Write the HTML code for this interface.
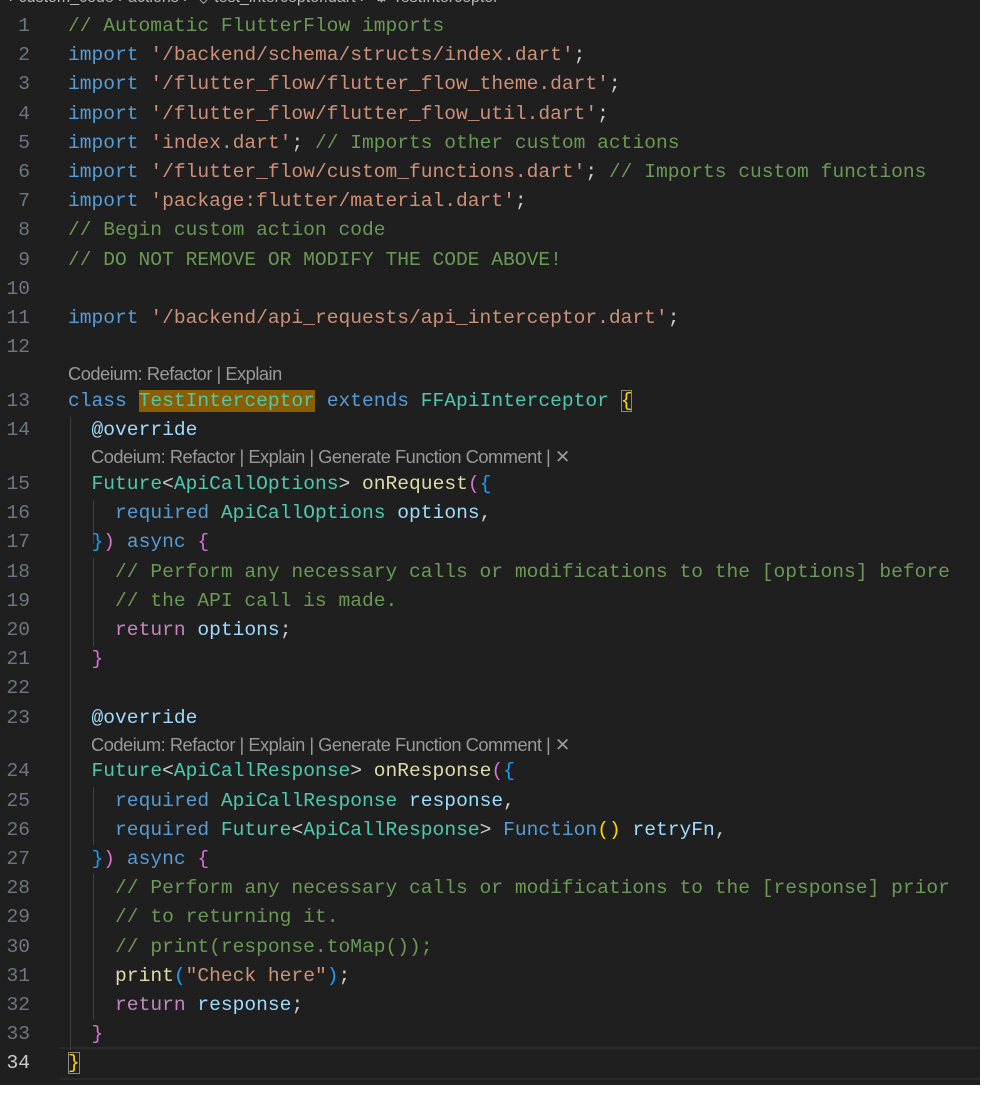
<!DOCTYPE html>
<html><head><meta charset="utf-8"><style>
html,body{margin:0;padding:0;background:#fff;width:1000px;height:1109px;overflow:hidden}
#ed{position:absolute;left:0;top:0;width:980px;height:1085px;background:#1f1f1f;overflow:hidden}
.bc{position:absolute;top:-13px;left:0;font:16px "Liberation Sans",sans-serif;color:#bbb;white-space:pre}
.ln{position:absolute;left:0;width:30px;text-align:right;font:19.6px "Liberation Mono",monospace;color:#6e7681;height:29.2px;line-height:29.2px}
.cd{position:absolute;left:68px;font:19.6px "Liberation Mono",monospace;color:#cccccc;white-space:pre;height:29.2px;line-height:29.2px}
.lens{position:absolute;font:18.3px "Liberation Sans",sans-serif;color:#999;white-space:pre;letter-spacing:-0.5px;line-height:24.6px}
.g{position:absolute;width:1px;background:#404040}
.c{color:#6a9955}.k{color:#569cd6}.s{color:#ce9178}.t{color:#4ec9b0}.f{color:#dcdcaa}.v{color:#9cdcfe}.p{color:#c586c0}
.b1{color:#ffd700}.b2{color:#da70d6}.b3{color:#179fff}
.hl{background:#8a5d00}.box{outline:1px solid #888;outline-offset:-1px}
</style></head><body><div id="ed">
<div class="bc">  › custom_code › actions ›  ◇ test_interceptor.dart ›  ⚙ TestInterceptor</div>
<div class="cur" style="position:absolute;left:60px;top:1047px;width:920px;height:29px;border-top:2px solid #2a2a2a;border-bottom:2px solid #2a2a2a"></div>
<div class="g" style="left:70px;top:417px;height:633px"></div>
<div class="g" style="left:93px;top:500px;height:44px"></div>
<div class="g" style="left:93px;top:558px;height:88px"></div>
<div class="g" style="left:93px;top:787px;height:58px"></div>
<div class="g" style="left:93px;top:874px;height:146px"></div>
<div id="code"></div>
</div>
<script>
const L=[
[1,'<span class="c">// Automatic FlutterFlow imports</span>'],
[2,'<span class="k">import</span> <span class="s">\'/backend/schema/structs/index.dart\'</span>;'],
[3,'<span class="k">import</span> <span class="s">\'/flutter_flow/flutter_flow_theme.dart\'</span>;'],
[4,'<span class="k">import</span> <span class="s">\'/flutter_flow/flutter_flow_util.dart\'</span>;'],
[5,'<span class="k">import</span> <span class="s">\'index.dart\'</span>; <span class="c">// Imports other custom actions</span>'],
[6,'<span class="k">import</span> <span class="s">\'/flutter_flow/custom_functions.dart\'</span>; <span class="c">// Imports custom functions</span>'],
[7,'<span class="k">import</span> <span class="s">\'package:flutter/material.dart\'</span>;'],
[8,'<span class="c">// Begin custom action code</span>'],
[9,'<span class="c">// DO NOT REMOVE OR MODIFY THE CODE ABOVE!</span>'],
[10,''],
[11,'<span class="k">import</span> <span class="s">\'/backend/api_requests/api_interceptor.dart\'</span>;'],
[12,''],
['L','Codeium: Refactor | Explain',68],
[13,'<span class="k">class</span> <span class="t hl">TestInterceptor</span> <span class="k">extends</span> <span class="t">FFApiInterceptor</span> <span class="b1 box">{</span>'],
[14,'  <span class="v">@override</span>'],
['L','Codeium: Refactor | Explain | Generate Function Comment | ✕',91],
[15,'  <span class="t">Future</span>&lt;<span class="t">ApiCallOptions</span>&gt; <span class="f">onRequest</span><span class="b2">(</span><span class="b3">{</span>'],
[16,'    <span class="k">required</span> <span class="t">ApiCallOptions</span> <span class="v">options</span>,'],
[17,'  <span class="b3">}</span><span class="b2">)</span> <span class="k">async</span> <span class="b2">{</span>'],
[18,'    <span class="c">// Perform any necessary calls or modifications to the [options] before</span>'],
[19,'    <span class="c">// the API call is made.</span>'],
[20,'    <span class="p">return</span> <span class="v">options</span>;'],
[21,'  <span class="b2">}</span>'],
[22,''],
[23,'  <span class="v">@override</span>'],
['L','Codeium: Refactor | Explain | Generate Function Comment | ✕',91],
[24,'  <span class="t">Future</span>&lt;<span class="t">ApiCallResponse</span>&gt; <span class="f">onResponse</span><span class="b2">(</span><span class="b3">{</span>'],
[25,'    <span class="k">required</span> <span class="t">ApiCallResponse</span> <span class="v">response</span>,'],
[26,'    <span class="k">required</span> <span class="t">Future</span>&lt;<span class="t">ApiCallResponse</span>&gt; <span class="k">Function</span><span class="b1">()</span> <span class="v">retryFn</span>,'],
[27,'  <span class="b3">}</span><span class="b2">)</span> <span class="k">async</span> <span class="b2">{</span>'],
[28,'    <span class="c">// Perform any necessary calls or modifications to the [response] prior</span>'],
[29,'    <span class="c">// to returning it.</span>'],
[30,'    <span class="c">// print(response.toMap());</span>'],
[31,'    <span class="f">print</span><span class="b3">(</span><span class="s">"Check here"</span><span class="b3">)</span>;'],
[32,'    <span class="p">return</span> <span class="v">response</span>;'],
[33,'  <span class="b2">}</span>'],
[34,'<span class="b1 box">}</span>'],
[35,'']
];
let y=12,h='';
for(const r of L){
 if(r[0]==='L'){h+=`<div class="lens" style="left:${r[2]}px;top:${y}px">${r[1]}</div>`;y+=24.6;continue;}
 const col=r[0]==34?'#cccccc':'#6e7681';
 h+=`<div class="ln" style="top:${y}px;color:${col}">${r[0]}</div><div class="cd" style="top:${y}px">${r[1]}</div>`;
 y+=29.2;
}
document.getElementById('code').innerHTML=h;
</script>
</body></html>
